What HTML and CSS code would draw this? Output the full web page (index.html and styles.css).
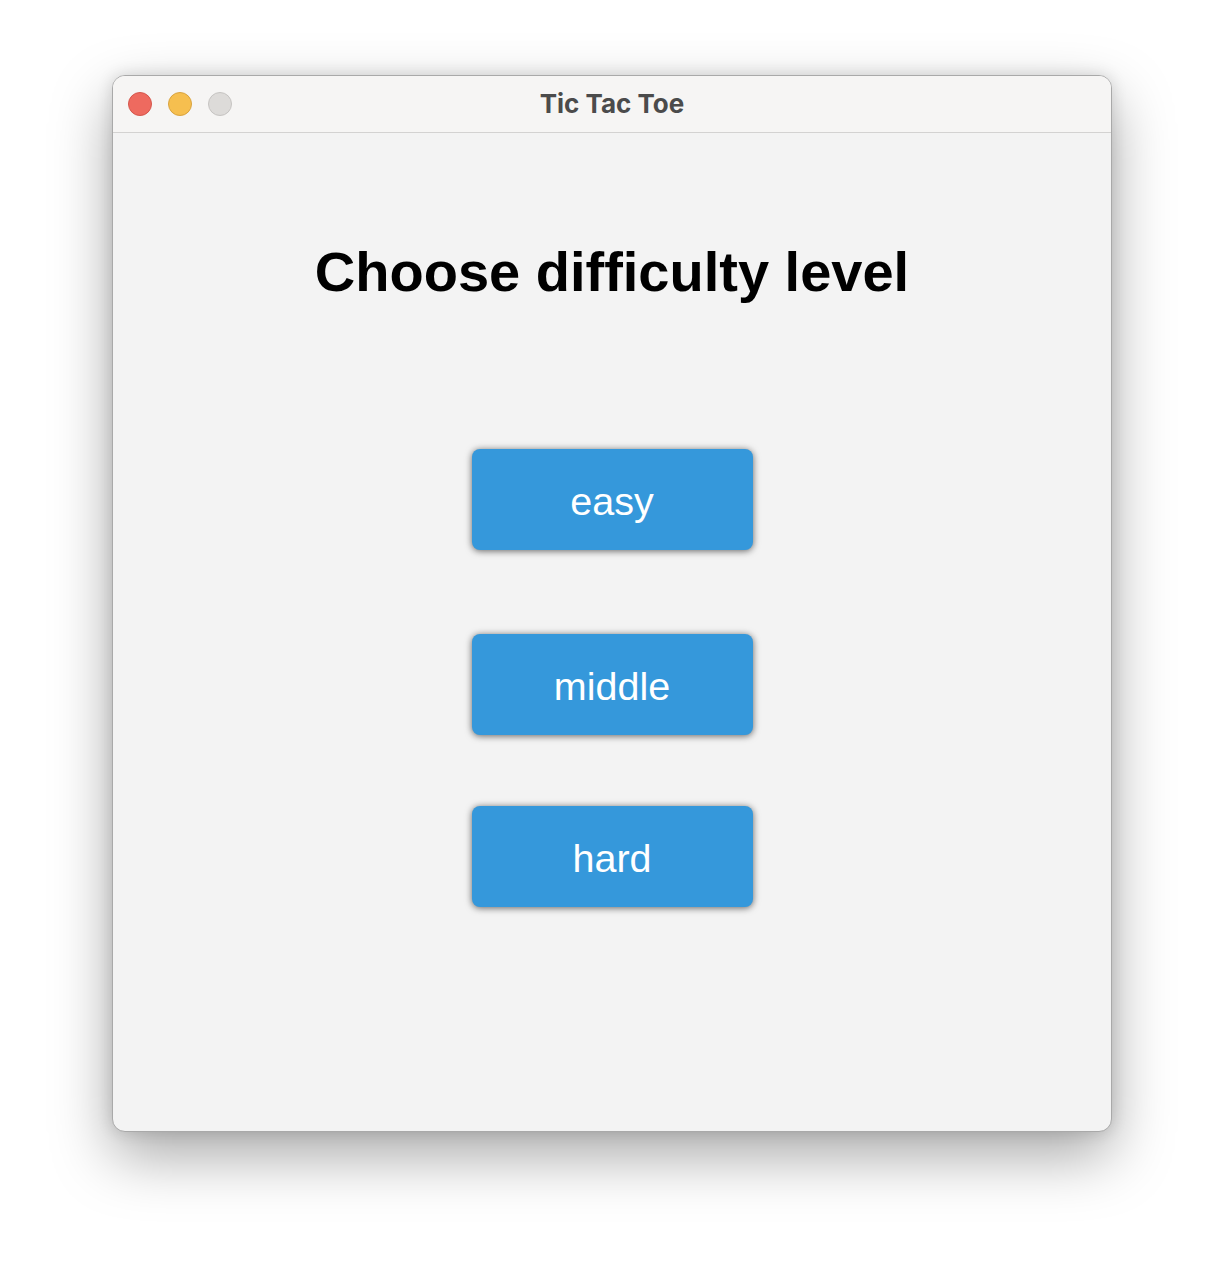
FILE: index.html
```html
<!DOCTYPE html>
<html>
<head>
<meta charset="utf-8">
<title>Tic Tac Toe</title>
<link rel="stylesheet" href="styles.css">
</head>
<body>
<div class="window">
  <div class="titlebar">
    <div class="lights">
      <span class="light red"></span>
      <span class="light yellow"></span>
      <span class="light gray"></span>
    </div>
    <div class="title">Tic Tac Toe</div>
  </div>
  <div class="content">
    <h1 class="heading">Choose difficulty level</h1>
    <div class="buttons">
      <button class="btn btn-easy">easy</button>
      <button class="btn btn-middle">middle</button>
      <button class="btn btn-hard">hard</button>
    </div>
  </div>
</div>
</body>
</html>
```

FILE: styles.css
```css
html, body {
  margin: 0;
  padding: 0;
  background: #ffffff;
}
body {
  padding: 75px 0 0 112px;
  height: 1280px;
  box-sizing: border-box;
  overflow: hidden;
}
.window {
  width: 1000px;
  height: 1057px;
  box-sizing: border-box;
  border: 1px solid #a9a9a9;
  border-radius: 13px;
  background: #f3f3f3;
  overflow: hidden;
  display: flex;
  flex-direction: column;
  box-shadow: 0 24px 60px rgba(0, 0, 0, 0.34), 0 0 16px rgba(0, 0, 0, 0.14);
}
.titlebar {
  position: relative;
  height: 56px;
  flex: none;
  background: #f6f5f4;
  border-bottom: 1px solid #d3d2d1;
  display: flex;
  align-items: center;
  justify-content: center;
}
.lights {
  position: absolute;
  left: 15px;
  top: 16px;
  display: flex;
  gap: 16px;
}
.light {
  width: 22px;
  height: 22px;
  border-radius: 50%;
  border: 1px solid transparent;
}
.red { background: #ee6a5f; border-color: #d5564c; }
.yellow { background: #f6bf4f; border-color: #d9a33f; }
.gray { background: #dddbd9; border-color: #c6c4c2; }
.title {
  font-family: Inter, "Liberation Sans", sans-serif;
  font-weight: 700;
  font-size: 26px;
  color: #4b4b4b;
  margin-top: -1px;
}
.content {
  flex: 1;
  display: flex;
  flex-direction: column;
  align-items: center;
  padding-top: 107px;
}
.heading {
  margin: 0;
  font-family: "Liberation Sans", Arial, sans-serif;
  font-weight: 700;
  font-size: 56px;
  line-height: 64px;
  color: #000;
}
.buttons {
  display: flex;
  flex-direction: column;
  align-items: center;
  margin-top: 145px;
}
.btn {
  width: 281px;
  height: 101px;
  border: none;
  border-radius: 8px;
  background: #3598db;
  color: #ffffff;
  font-family: "Liberation Sans", Arial, sans-serif;
  font-size: 39.5px;
  padding: 3px 0 0 0;
  box-shadow: 0 1px 7px rgba(0, 0, 0, 0.6);
}
.btn-middle { margin-top: 84px; }
.btn-hard { margin-top: 71px; }
```
